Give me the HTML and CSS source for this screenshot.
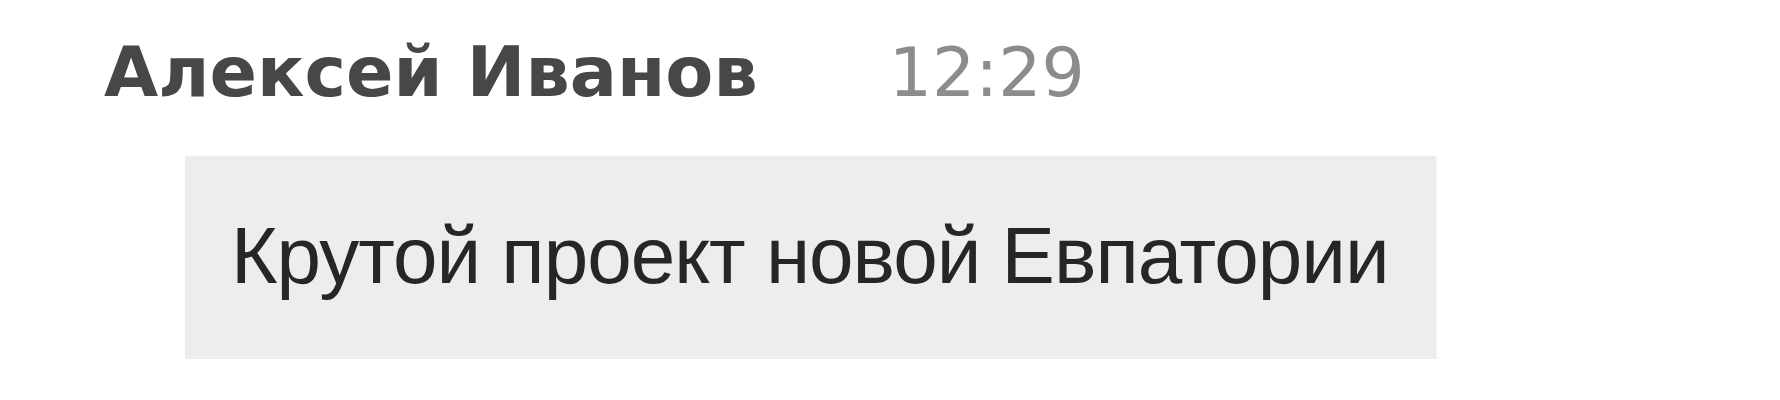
FILE: index.html
```html
<!DOCTYPE html>
<html lang="ru">
<head>
    <meta charset="UTF-8">
    <meta name="viewport" content="width=device-width, initial-scale=1.0">
    <title>Сообщение</title>
    <link rel="stylesheet" href="styles.css">
</head>
<body>
    <main class="chat">
        <article class="message">
            <header class="message-head">
                <span class="author">Алексей Иванов</span>
                <time class="time">12:29</time>
            </header>
            <p class="bubble">Крутой проект новой Евпатории</p>
        </article>
    </main>
</body>
</html>
```

FILE: styles.css
```css
body {
    margin: 0;
    background: #fff;
    font-family: "DejaVu Sans", sans-serif;
}

.chat {
    padding: 30px 0 0 104px;
}

.message {
    display: flex;
    flex-direction: column;
    align-items: flex-start;
}

.message-head {
    display: flex;
    align-items: baseline;
    gap: 131px;
    line-height: 84px;
}

.author {
    font-size: 70px;
    font-weight: bold;
    color: #474747;
}

.time {
    font-size: 68px;
    color: #8c8c8c;
}

.bubble {
    margin: 41px 0 0 81px;
    padding: 54px 47px 57px 46px;
    background: #ededed;
    color: #262626;
    font-family: "Liberation Sans", Arial, sans-serif;
    font-size: 80px;
    line-height: 92px;
    letter-spacing: -1px;
    box-shadow: 1px 1px 3px rgba(0, 0, 0, 0.05);
}
```
